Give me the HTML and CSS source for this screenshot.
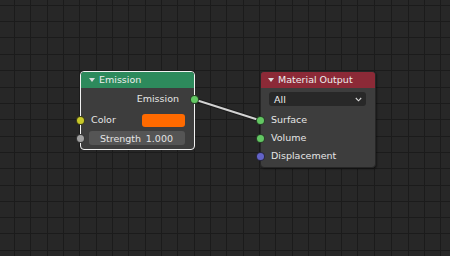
FILE: index.html
```html
<!DOCTYPE html>
<html>
<head>
<meta charset="utf-8">
<link rel="stylesheet" href="styles.css">
</head>
<body>
<div class="canvas">
  <svg class="grid" width="450" height="256" viewBox="0 0 450 256" shape-rendering="crispEdges">
    <g fill="#1b1b1b">
      <rect x="14" y="0" width="1" height="256"/><rect x="30" y="0" width="1" height="256"/>
      <rect x="47" y="0" width="1" height="256"/><rect x="63" y="0" width="1" height="256"/>
      <rect x="79" y="0" width="1" height="256"/><rect x="96" y="0" width="1" height="256"/>
      <rect x="112" y="0" width="1" height="256"/><rect x="128" y="0" width="1" height="256"/>
      <rect x="145" y="0" width="1" height="256"/><rect x="161" y="0" width="1" height="256"/>
      <rect x="177" y="0" width="1" height="256"/><rect x="194" y="0" width="1" height="256"/>
      <rect x="210" y="0" width="1" height="256"/><rect x="226" y="0" width="1" height="256"/>
      <rect x="243" y="0" width="1" height="256"/><rect x="259" y="0" width="1" height="256"/>
      <rect x="275" y="0" width="1" height="256"/><rect x="292" y="0" width="1" height="256"/>
      <rect x="308" y="0" width="1" height="256"/><rect x="325" y="0" width="1" height="256"/>
      <rect x="341" y="0" width="1" height="256"/><rect x="357" y="0" width="1" height="256"/>
      <rect x="374" y="0" width="1" height="256"/><rect x="391" y="0" width="1" height="256"/>
      <rect x="408" y="0" width="1" height="256"/><rect x="424" y="0" width="1" height="256"/>
      <rect x="440" y="0" width="1" height="256"/>
      <rect x="0" y="5" width="450" height="1"/><rect x="0" y="21" width="450" height="1"/>
      <rect x="0" y="37" width="450" height="1"/><rect x="0" y="54" width="450" height="1"/>
      <rect x="0" y="70" width="450" height="1"/><rect x="0" y="87" width="450" height="1"/>
      <rect x="0" y="103" width="450" height="1"/><rect x="0" y="119" width="450" height="1"/>
      <rect x="0" y="136" width="450" height="1"/><rect x="0" y="152" width="450" height="1"/>
      <rect x="0" y="168" width="450" height="1"/><rect x="0" y="185" width="450" height="1"/>
      <rect x="0" y="201" width="450" height="1"/><rect x="0" y="217" width="450" height="1"/>
      <rect x="0" y="233" width="450" height="1"/><rect x="0" y="250" width="450" height="1"/>
    </g>
  </svg>

  <svg class="links" width="450" height="256" viewBox="0 0 450 256">
    <line x1="194.5" y1="99.5" x2="260.5" y2="120.5" stroke="#1c1c1c" stroke-width="4" stroke-linecap="round"/>
    <line x1="194.5" y1="99.5" x2="260.5" y2="120.5" stroke="#d2d2d2" stroke-width="2" stroke-linecap="round"/>
  </svg>

  <div class="node node-emission">
    <div class="node-header header-shader">
      <span class="collapse"></span>
      <span class="node-title">Emission</span>
    </div>
    <div class="node-body body-emission">
      <div class="row row-out">
        <span class="label">Emission</span>
        <span class="socket socket-out sock-shader"></span>
      </div>
      <div class="row row-color">
        <span class="socket socket-in sock-color"></span>
        <span class="label">Color</span>
        <span class="swatch"></span>
      </div>
      <div class="row row-strength">
        <span class="socket socket-in sock-value"></span>
        <div class="field">
          <span>Strength</span>
          <span>1.000</span>
        </div>
      </div>
    </div>
  </div>

  <div class="node node-output">
    <div class="node-header header-output">
      <span class="collapse"></span>
      <span class="node-title">Material Output</span>
    </div>
    <div class="node-body body-output">
      <div class="dropdown">
        <span>All</span>
        <svg class="chev" width="7" height="5" viewBox="0 0 7 5"><polyline points="0.8,1 3.5,3.8 6.2,1" fill="none" stroke="#d8d8d8" stroke-width="1.1"/></svg>
      </div>
      <div class="row row-in">
        <span class="socket socket-in sock-shader"></span>
        <span class="label">Surface</span>
      </div>
      <div class="row row-in">
        <span class="socket socket-in sock-shader"></span>
        <span class="label">Volume</span>
      </div>
      <div class="row row-in">
        <span class="socket socket-in sock-vector"></span>
        <span class="label">Displacement</span>
      </div>
    </div>
  </div>
</div>
</body>
</html>
```

FILE: styles.css
```css
html, body {
  margin: 0;
  padding: 0;
  background: #272727;
}

.canvas {
  position: relative;
  width: 450px;
  height: 256px;
  overflow: hidden;
  background: #272727;
  font-family: "DejaVu Sans", sans-serif;
  font-size: 9.5px;
  color: #e6e6e6;
}

.grid, .links {
  position: absolute;
  left: 0;
  top: 0;
}

.links {
  z-index: 1;
}

.node {
  position: absolute;
  box-sizing: border-box;
  display: flex;
  flex-direction: column;
  border-radius: 4px;
  background: #3d3d3d;
}

.node-emission {
  left: 80px;
  top: 71px;
  width: 115px;
  height: 79px;
  border: 1px solid #f2f2f2;
}

.node-output {
  left: 260px;
  top: 71px;
  width: 116px;
  height: 97px;
  border: 1px solid #262626;
  box-shadow: 1px 1px 2px rgba(0, 0, 0, 0.45);
}

.node-header {
  height: 16px;
  display: flex;
  align-items: center;
  border-radius: 3px 3px 0 0;
  color: #eeeeee;
}

.header-shader {
  background: #2d8a5c;
  padding-left: 8px;
}

.header-output {
  background: #8c2a37;
  padding-left: 7px;
}

.collapse {
  width: 0;
  height: 0;
  border-left: 3px solid transparent;
  border-right: 3px solid transparent;
  border-top: 4px solid #dcdcdc;
  margin-right: 4px;
}

.node-title {
  line-height: 16px;
  margin-top: -1px;
}

.node-body {
  display: flex;
  flex-direction: column;
}

.body-emission {
  padding: 2px 0 2px 0;
}

.body-output {
  padding: 4px 0 2px 0;
}

.row {
  position: relative;
  height: 18px;
  display: flex;
  align-items: center;
}

.label {
  margin-top: -1px;
}

.row-out {
  justify-content: flex-end;
  padding-right: 15px;
}

.row-color {
  margin-top: 3px;
  padding-left: 10px;
  padding-right: 9px;
  justify-content: space-between;
}

.row-strength {
  padding-left: 8px;
  padding-right: 9px;
}

.row-in {
  padding-left: 10px;
}

.swatch {
  width: 43px;
  height: 13px;
  border-radius: 3px;
  background: #ff6a00;
}

.field {
  flex: 1;
  height: 14px;
  border-radius: 3px;
  background: #555555;
  display: flex;
  align-items: center;
  justify-content: space-between;
  padding: 0 12px 0 11px;
  color: #e4e4e4;
}

.dropdown {
  margin: 0 9px 5px 8px;
  height: 14px;
  border-radius: 3px;
  background: #282828;
  display: flex;
  align-items: center;
  justify-content: space-between;
  padding: 0 4px 0 5px;
  color: #eeeeee;
}

.chev {
  display: block;
}

.socket {
  position: absolute;
  z-index: 2;
  top: 5px;
  width: 9px;
  height: 9px;
  box-sizing: border-box;
  border-radius: 50%;
  border: 1px solid rgba(20, 20, 20, 0.75);
}

.socket-in {
  left: -5px;
}

.socket-out {
  left: 109px;
}

.sock-shader { background: #63c763; }
.sock-color { background: #c7c729; }
.sock-value { background: #a1a1a1; }
.sock-vector { background: #6363c7; }
```
